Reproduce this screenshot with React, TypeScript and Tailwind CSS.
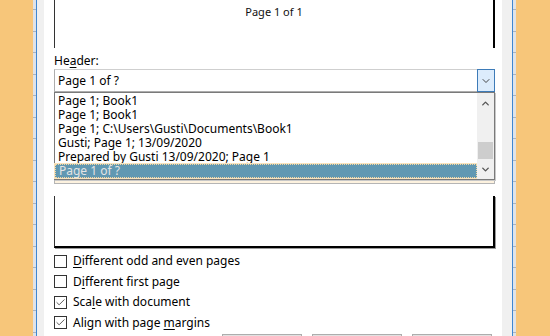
import { Check, ChevronDown, ChevronUp } from "lucide-react"

const ticks = Array.from({ length: 16 })

function Ruler() {
  return (
    <div className="w-[3px] bg-[#dfe3e8] pt-[9px]">
      {ticks.map((_, i) => (
        <div key={i} className="h-[21.5px]">
          <div className="h-px bg-[#a9b3c0]" />
        </div>
      ))}
    </div>
  )
}

function Key({ children }: { children: string }) {
  return <span className="underline underline-offset-2 decoration-1">{children}</span>
}

const items = [
  "Page 1; Book1",
  "Page 1; Book1",
  "Page 1; C:\\Users\\Gusti\\Documents\\Book1",
  "Gusti; Page 1; 13/09/2020",
  "Prepared by Gusti 13/09/2020; Page 1",
]

function CheckRow({ checked, children }: { checked?: boolean; children: React.ReactNode }) {
  return (
    <div className="h-[20.5px] flex items-center gap-[6px]">
      <div className="w-[13px] h-[13px] border border-[#333] bg-white flex items-center justify-center">
        {checked && <Check className="w-[11px] h-[11px] text-[#222]" strokeWidth={1.6} />}
      </div>
      <span className="text-[12px] text-black">{children}</span>
    </div>
  )
}

export default function App() {
  return (
    <div
      className="w-[550px] h-[336px] bg-[#f7c67a] flex overflow-hidden"
      style={{ fontFamily: '"Noto Sans", sans-serif' }}
    >
      <div className="w-[33px] shrink-0" />
      <Ruler />
      <div className="w-px bg-[#3f87d1]" />

      {/* dialog */}
      <div className="w-[475px] shrink-0 bg-[#f0f0f0] pl-[7px]">
        <div className="w-[458px] h-full bg-white pl-[10px] pr-[7px]">
          {/* header preview */}
          <div className="h-[48px] border-l border-[#333] border-r-2 border-r-black flex justify-center pt-[5px]">
            <span className="text-[11px] leading-[14px] text-[#111]">Page 1 of 1</span>
          </div>

          <div className="relative">
            <div className="h-[21px] pt-[5px] text-[12px] leading-[16px]">
              He<Key>a</Key>der:
            </div>
            {/* header combo */}
            <div className="h-[23px] border border-[#adadad] border-t-[#cfcfcf] flex items-center">
              <span className="flex-1 pl-[3px] text-[12px]">Page 1 of ?</span>
              <div className="w-[18px] h-[23px] -mr-px border border-[#3d7bb8] bg-[#dcecfc] flex items-center justify-center">
                <ChevronDown className="w-[12px] h-[12px] text-[#333]" strokeWidth={1.8} />
              </div>
            </div>

            {/* controls hidden under the drop list */}
            <div className="h-[69px]" />
            {/* footer combo */}
            <div className="h-[23px] border border-[#b5b5b5] bg-[#fdf2df]" />

            {/* drop list */}
            <div className="absolute left-0 right-0 top-[44px] h-[88px] bg-white border border-[#7a7a7a] flex shadow-[1px_1px_0_#c8c8c8]">
              <div className="flex-1 pt-px">
                {items.map((t, i) => (
                  <div key={i} className="h-[14px] pl-[3px] text-[12px] leading-[14px] text-black whitespace-nowrap">
                    {t}
                  </div>
                ))}
                <div className="h-[14px] pl-[3px] text-[12px] leading-[12px] text-[#e4e4e4] bg-[#6198b2] border border-dotted border-[#f3d7a4] outline outline-1 outline-[#f9e3bd]">
                  Page 1 of ?
                </div>
              </div>
              <div className="w-[17px] bg-[#f0f0f0] flex flex-col items-center">
                <div className="h-[20px] flex items-center">
                  <ChevronUp className="w-[11px] h-[11px] text-[#555]" strokeWidth={3} />
                </div>
                <div className="h-[29px]" />
                <div className="w-[15px] h-[17px] bg-[#cdcdcd]" />
                <div className="flex-1 flex items-center">
                  <ChevronDown className="w-[11px] h-[11px] text-[#555]" strokeWidth={3} />
                </div>
              </div>
            </div>
          </div>

          {/* footer preview */}
          <div className="mt-[12px] h-[52px] border-l border-[#333] border-r-2 border-r-black border-b-2 border-b-black shadow-[1px_1px_0_#9a9a9a]" />

          <div className="pt-[3px]">
            <CheckRow>
              <Key>D</Key>ifferent odd and even pages
            </CheckRow>
            <CheckRow>
              D<Key>i</Key>fferent first page
            </CheckRow>
            <CheckRow checked>
              Sca<Key>l</Key>e with document
            </CheckRow>
            <CheckRow checked>
              Align with page <Key>m</Key>argins
            </CheckRow>
          </div>

          {/* buttons peeking at bottom */}
          <div className="mt-px flex pl-[168px] gap-[10px]">
            <div className="w-[80px] h-[10px] border border-[#adadad] bg-[#e1e1e1]" />
            <div className="w-[90px] h-[10px] border border-[#adadad] bg-[#e1e1e1]" />
            <div className="w-[80px] h-[10px] border border-[#adadad] bg-[#e1e1e1]" />
          </div>
        </div>
      </div>

      <div className="w-px bg-[#3f87d1]" />
      <Ruler />
      <div className="flex-1" />
    </div>
  )
}
